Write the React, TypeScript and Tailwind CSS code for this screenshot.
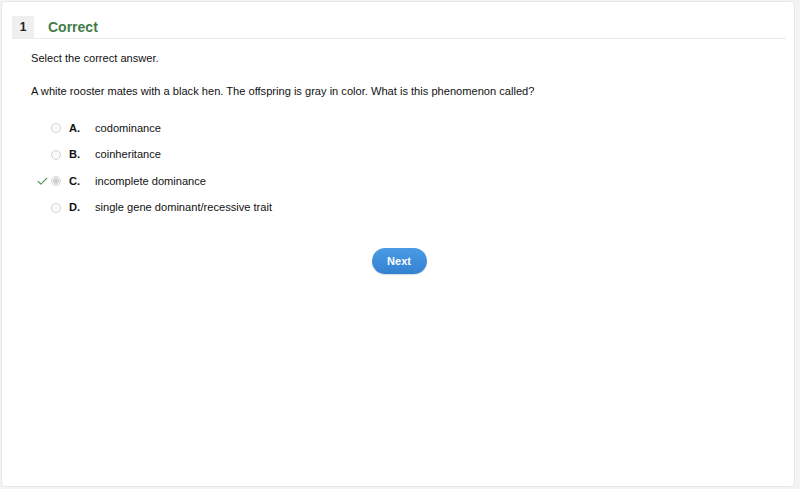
import { Check } from "lucide-react";

const options = [
  { letter: "A.", text: "codominance", selected: false },
  { letter: "B.", text: "coinheritance", selected: false },
  { letter: "C.", text: "incomplete dominance", selected: true },
  { letter: "D.", text: "single gene dominant/recessive trait", selected: false },
];

export default function App() {
  return (
    <div className="w-[800px] h-[489px] bg-[#f4f4f4] p-[1px] pr-[5px] pb-[2px] font-['Liberation_Sans',Arial,sans-serif]">
      <div className="h-full bg-white border border-[#e6e6e6] rounded-[4px] pt-[14px] pl-[10px] pr-[8px]">
        {/* Header */}
        <div className="flex items-center h-[23px] border-b border-[#ebebeb]">
          <span className="w-[22px] h-[22px] bg-[#efefef] flex items-center justify-center text-[12px] font-bold text-[#222]">
            1
          </span>
          <span className="ml-[14px] text-[14px] font-bold text-[#3f7c46]">Correct</span>
        </div>

        <div className="pl-[19px] text-[11.1px] text-[#111]">
          <p className="mt-[12px] leading-[14px]">Select the correct answer.</p>
          <p className="mt-[19px] leading-[14px]">
            A white rooster mates with a black hen. The offspring is gray in color. What is this phenomenon called?
          </p>

          <div className="mt-[17px] flex flex-col">
            {options.map((o) => (
              <div key={o.letter} className="flex items-center h-[26.5px]">
                <span className="w-[20px] flex justify-start pl-[5px]">
                  {o.selected && <Check size={13} strokeWidth={2} className="text-[#4f9a5b]" />}
                </span>
                <span className="w-[10px] h-[10px] rounded-full border border-[#d4d4d4] bg-[#fafafa] flex items-center justify-center">
                  {o.selected && <span className="w-[6px] h-[6px] rounded-full bg-[#cfcfcf]" />}
                </span>
                <span className="ml-[8px] w-[26px] font-bold">{o.letter}</span>
                <span>{o.text}</span>
              </div>
            ))}
          </div>

          <div className="mt-[27px] flex justify-center pr-[19px]">
            <button className="w-[55px] h-[26px] rounded-full bg-gradient-to-b from-[#4a9be6] to-[#3382d0] text-white text-[11px] font-bold shadow-[0_1px_1px_rgba(0,0,0,0.15)]">
              Next
            </button>
          </div>
        </div>
      </div>
    </div>
  );
}
